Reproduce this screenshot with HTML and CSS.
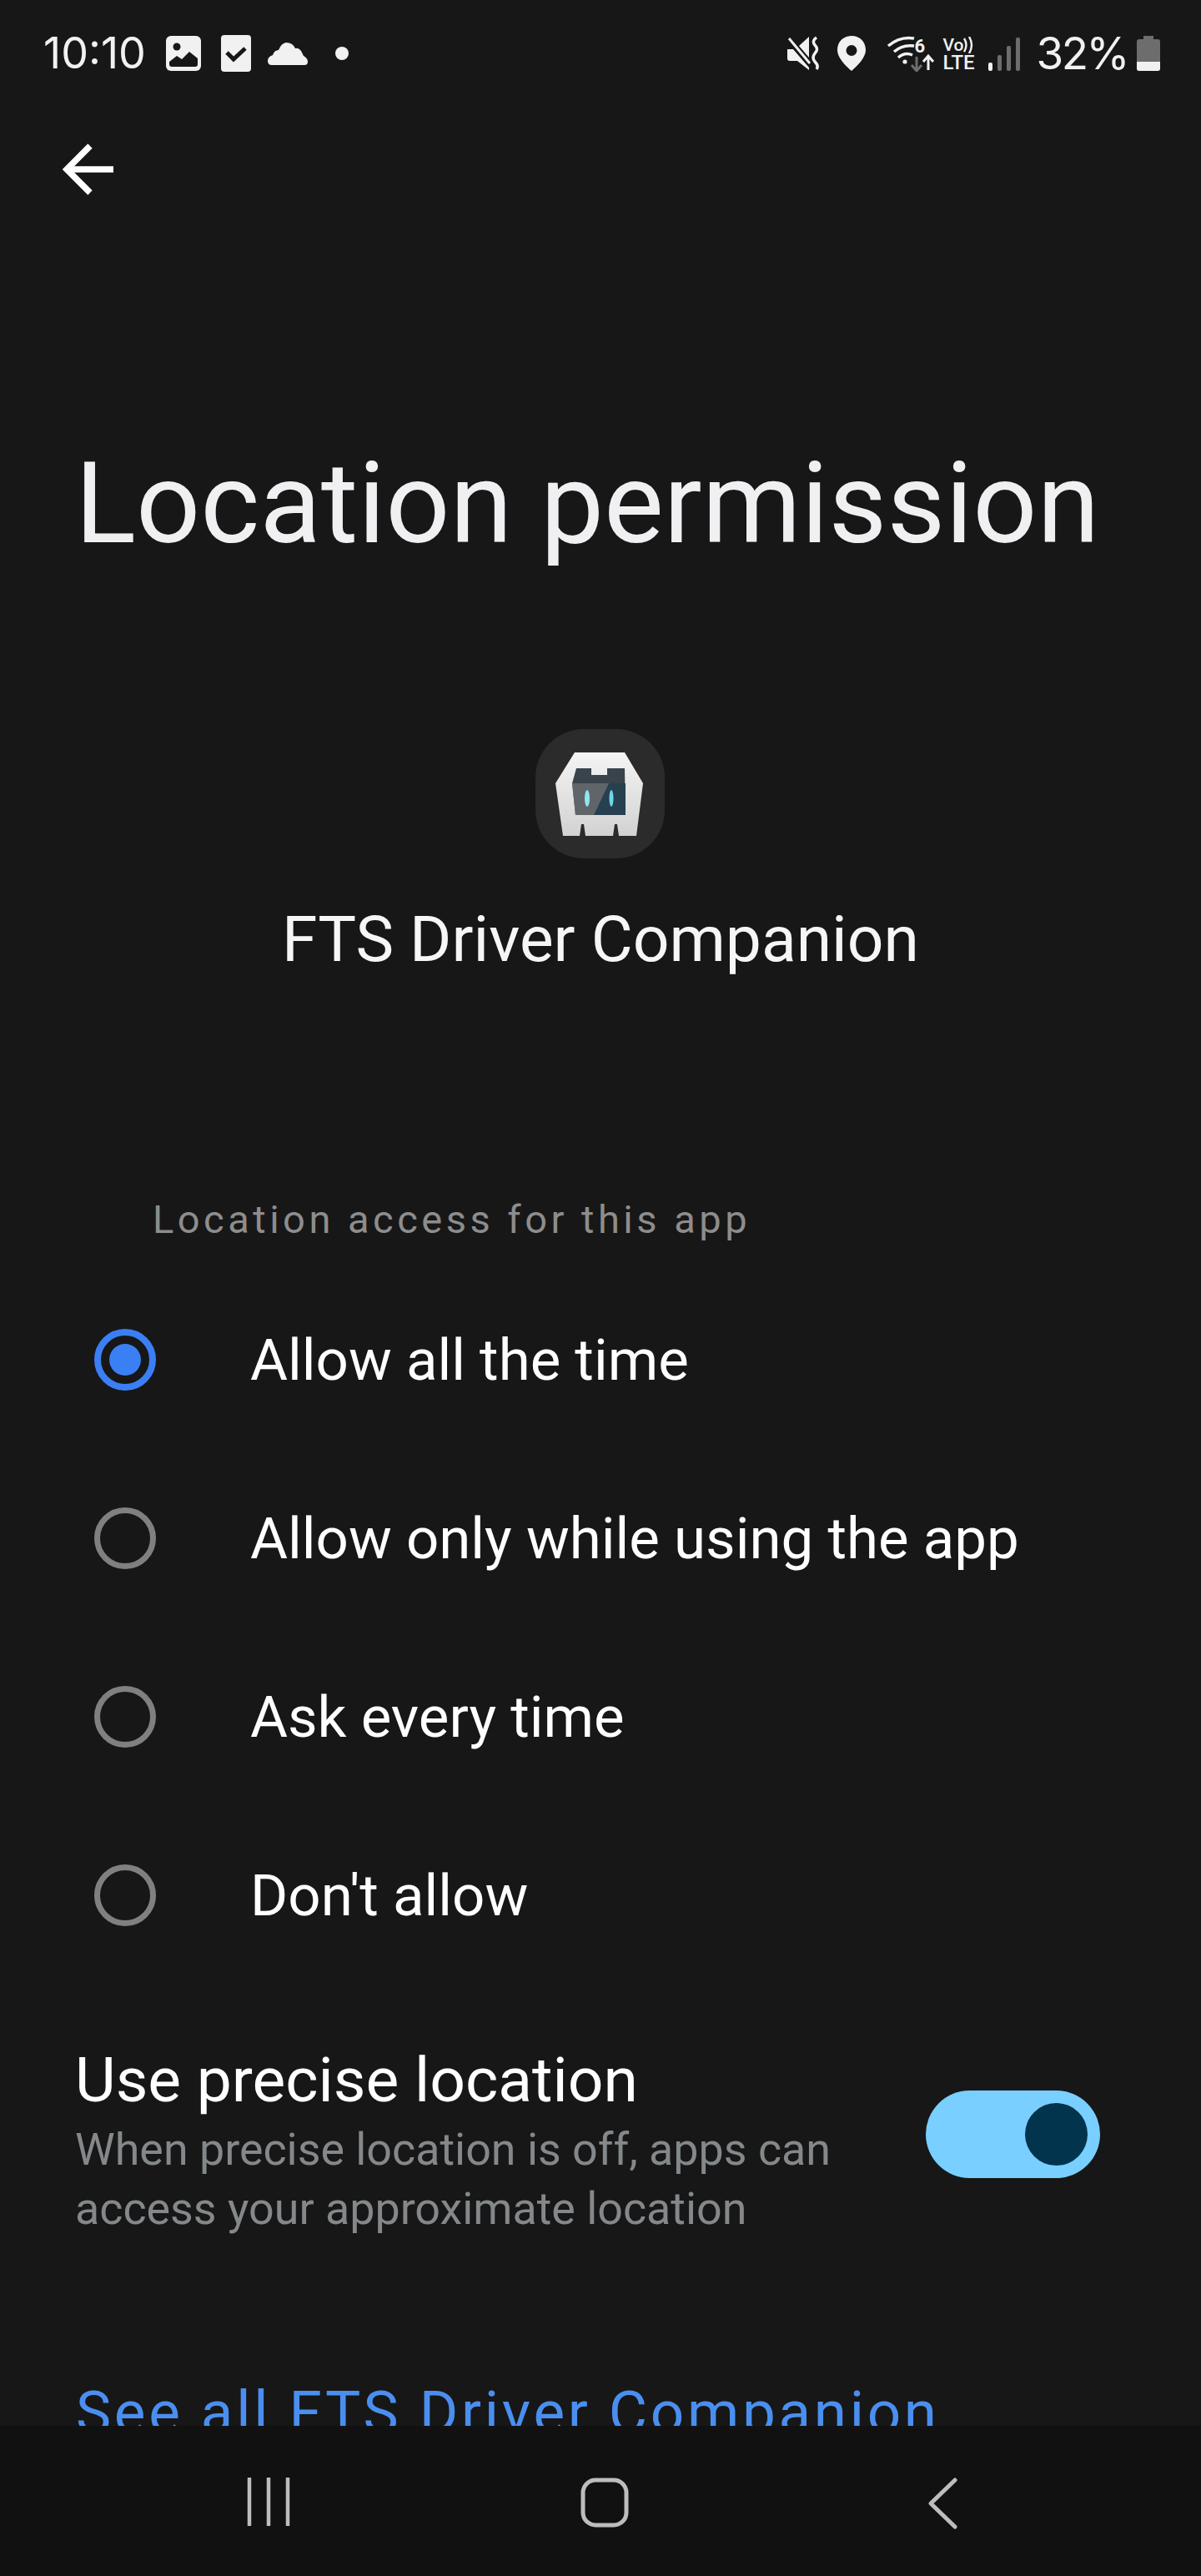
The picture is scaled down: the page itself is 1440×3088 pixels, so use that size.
FILE: index.html
```html
<!DOCTYPE html>
<html lang="en">

<head>
    <meta charset="UTF-8">
    <meta name="viewport" content="width=device-width, initial-scale=1.0">
    <title>Location permission</title>
    <link rel="stylesheet" href="styles.css">
</head>

<body>
    <div class="screen">
        <div class="content">
            <!-- status bar -->
            <div class="status-bar">
                <div class="status-left">
                    <span class="clock">10:10</span>
                    <svg class="ic-gallery" width="42" height="42" viewBox="0 0 42 42">
                        <rect width="42" height="42" rx="6" fill="#f1f1f1" />
                        <circle cx="13" cy="13" r="4.5" fill="#171717" />
                        <path d="M4 31 L13 24 L19 28 L28 19 L38 27 V34 Q38 37 35 37 H7 Q4 37 4 34 Z" fill="#171717" />
                    </svg>
                    <svg class="ic-check" width="36" height="44" viewBox="0 0 36 44">
                        <rect width="36" height="44" rx="4" fill="#f1f1f1" />
                        <path d="M7 21 L15 29 L29 16" fill="none" stroke="#171717" stroke-width="5" />
                    </svg>
                    <svg class="ic-cloud" width="48" height="28" viewBox="0 0 48 28">
                        <path d="M5 27 Q0 27 0 22 Q0 17 6 15 Q8 9 13 9 Q16 1 22 0 Q30 0 33 7 Q37 6 40 10 Q42 14 43 16 Q48 19 48 23 Q48 27 44 27 Z" fill="#f1f1f1" />
                    </svg>
                    <span class="dot"></span>
                </div>
                <div class="status-right">
                    <svg class="ic-mute" width="40" height="42" viewBox="0 0 40 42">
                        <path d="M0 16 H7 L26 38 V41 L12 30 H3 Q0 30 0 27 Z M14 12 L26 1 V26 Z" fill="#f1f1f1" />
                        <path d="M2 3 L27 33" stroke="#f1f1f1" stroke-width="3" />
                        <path d="M35 2 Q29 6 33 11 Q38 16 33 21 Q29 26 33 31 Q38 36 35 40" fill="none" stroke="#f1f1f1" stroke-width="3.5" />
                    </svg>
                    <svg class="ic-pin" width="34" height="42" viewBox="0 0 34 42">
                        <path fill-rule="evenodd" d="M17 0 C27 0 34 7 34 17 C34 26 24 36 17 42 C10 36 0 26 0 17 C0 7 7 0 17 0 Z M17 11 A6.5 6.5 0 1 0 17 24 A6.5 6.5 0 1 0 17 11 Z" fill="#f1f1f1" />
                    </svg>
                    <div class="wifi">
                        <svg width="58" height="44" viewBox="0 0 58 44">
                            <path d="M2 13 Q16 1 33 4" fill="none" stroke="#f1f1f1" stroke-width="3.5" />
                            <path d="M9 20 Q19 11 33 13" fill="none" stroke="#f1f1f1" stroke-width="3.5" />
                            <path d="M14 27 Q22 20 31 24" fill="none" stroke="#f1f1f1" stroke-width="3.5" />
                            <circle cx="22" cy="32" r="2.6" fill="#f1f1f1" />
                            <path d="M36 26 V42 M30 36 L36 43 L42 36" fill="none" stroke="#6d6d6d" stroke-width="3" />
                            <path d="M50 42 V26 M44 32 L50 25 L56 32" fill="none" stroke="#f1f1f1" stroke-width="3" />
                        </svg>
                        <span class="wifi-six">6</span>
                    </div>
                    <div class="volte">
                        <span class="vo">Vo<svg width="13" height="20" viewBox="0 0 13 20">
                                <path d="M1 2 Q6 10 1 18 M7 0 Q13 10 7 20" fill="none" stroke="#f1f1f1" stroke-width="2.4" />
                            </svg></span>
                        <span class="lte">LTE</span>
                    </div>
                    <div class="signal">
                        <span class="bar bar-1"></span>
                        <span class="bar bar-2"></span>
                        <span class="bar bar-3"></span>
                        <span class="bar bar-4"></span>
                    </div>
                    <span class="pct">32%</span>
                    <svg class="ic-battery" width="28" height="42" viewBox="0 0 28 42">
                        <path d="M8 0 H20 V4 H25 Q28 4 28 7 V39 Q28 42 25 42 H3 Q0 42 0 39 V7 Q0 4 3 4 H8 Z" fill="#6d6d6d" />
                        <path d="M0 31 H28 V39 Q28 42 25 42 H3 Q0 42 0 39 Z" fill="#f1f1f1" />
                    </svg>
                </div>
            </div>

            <!-- back arrow -->
            <div class="header">
                <svg width="62" height="62" viewBox="0 0 62 62">
                    <path d="M33 3 L5 31 L33 59 M5 31 H61" fill="none" stroke="#fff" stroke-width="7.5" />
                </svg>
            </div>

            <h1 class="title">Location permission</h1>

            <div class="app-info">
                <div class="app-icon">
                    <svg width="106" height="100" viewBox="0 0 106 100">
                        <defs>
                            <linearGradient id="shell" x1="0" y1="0" x2="0" y2="1">
                                <stop offset="0" stop-color="#f4f4f4" />
                                <stop offset="1" stop-color="#d2d2d2" />
                            </linearGradient>
                        </defs>
                        <path d="M23 0 H83 L105 37 L97 100 H76 L74 86 H71 L69 100 H36 L34 86 H31 L29 100 H9 L0 37 Z" fill="url(#shell)" />
                        <path d="M25 19 H43 V27 H62 V19 H83 L84 75 H24 L20 37 Z" fill="#39434b" />
                        <path d="M64 37 H84 L84 75 H46 Z" fill="#27404f" />
                        <path d="M20 37 H64 L46 75 H24 Z" fill="#6a6e72" opacity="0.8" />
                        <ellipse cx="38" cy="55" rx="3" ry="10" fill="#8fe6f2" />
                        <ellipse cx="67" cy="55" rx="2.5" ry="10" fill="#6fd6ea" />
                    </svg>
                </div>
                <div class="app-name">FTS Driver Companion</div>
            </div>

            <div class="group-label">Location access for this app</div>

            <div class="options">
                <div class="option">
                    <span class="radio checked"></span>
                    <span class="option-text">Allow all the time</span>
                </div>
                <div class="option">
                    <span class="radio"></span>
                    <span class="option-text">Allow only while using the app</span>
                </div>
                <div class="option">
                    <span class="radio"></span>
                    <span class="option-text">Ask every time</span>
                </div>
                <div class="option">
                    <span class="radio"></span>
                    <span class="option-text">Don't allow</span>
                </div>
            </div>

            <div class="precise">
                <div class="precise-text">
                    <div class="precise-title">Use precise location</div>
                    <div class="precise-desc">When precise location is off, apps can<br>access your approximate location</div>
                </div>
                <div class="switch"><span class="thumb"></span></div>
            </div>

            <div class="see-all">See all FTS Driver Companion</div>
        </div>

        <!-- nav bar -->
        <div class="navbar">
            <svg class="nav-recents" width="52" height="58" viewBox="0 0 52 58">
                <path d="M3 1 V57 M26 1 V57 M49 1 V57" stroke="#bdbdbd" stroke-width="4.5" stroke-linecap="round" />
            </svg>
            <svg class="nav-home" width="58" height="60" viewBox="0 0 58 60">
                <rect x="3" y="3" width="52" height="54" rx="15" fill="none" stroke="#bdbdbd" stroke-width="5" />
            </svg>
            <svg class="nav-back" width="36" height="62" viewBox="0 0 36 62">
                <path d="M33 3 L4 31 L33 59" fill="none" stroke="#bdbdbd" stroke-width="5" stroke-linecap="round" stroke-linejoin="round" />
            </svg>
        </div>
    </div>
</body>

</html>
```

FILE: styles.css
```css
* {
    box-sizing: border-box;
}

html,
body {
    margin: 0;
    padding: 0;
}

body {
    font-family: 'Roboto', 'Liberation Sans', sans-serif;
    background-color: #171717;
    color: #fff;
}

.screen {
    width: 1440px;
    height: 3088px;
    display: flex;
    flex-direction: column;
    overflow: hidden;
}

.content {
    height: 2908px;
    overflow: hidden;
    flex: none;
}

/* status bar */
.status-bar {
    height: 130px;
    padding: 43px 49px 0 52px;
    display: flex;
    justify-content: space-between;
    align-items: flex-start;
    color: #f1f1f1;
}

.status-left,
.status-right {
    display: flex;
    align-items: center;
    height: 42px;
}

.clock {
    font-family: 'Inter', 'Roboto', sans-serif;
    font-size: 52px;
    font-weight: 400;
    width: 123px;
    letter-spacing: 0;
    line-height: 42px;
    white-space: nowrap;
}

.ic-gallery {
    margin-left: 24px;
}

.ic-check {
    margin-left: 24px;
}

.ic-cloud {
    margin-left: 20px;
    margin-top: 2px;
}

.dot {
    width: 16px;
    height: 16px;
    border-radius: 50%;
    background: #f1f1f1;
    margin-left: 33px;
}

.ic-pin {
    margin-left: 20px;
}

.wifi {
    position: relative;
    width: 58px;
    height: 44px;
    margin-left: 25px;
}

.wifi-six {
    position: absolute;
    top: 3px;
    left: 33px;
    font-size: 22px;
    line-height: 22px;
    font-weight: 700;
}

.volte {
    margin-left: 9px;
    width: 42px;
    display: flex;
    flex-direction: column;
    line-height: 20px;
    font-weight: 500;
}

.vo {
    font-size: 21px;
    display: flex;
    align-items: center;
    height: 22px;
}

.lte {
    font-size: 24px;
    height: 20px;
    letter-spacing: 0;
}

.signal {
    margin-left: 13px;
    display: flex;
    align-items: flex-end;
    gap: 6px;
    height: 42px;
}

.bar {
    width: 5px;
    background: #6d6d6d;
    border-radius: 2px;
}

.bar-1 {
    height: 10px;
    background: #f1f1f1;
}

.bar-2 {
    height: 19px;
}

.bar-3 {
    height: 30px;
}

.bar-4 {
    height: 40px;
}

.pct {
    margin-left: 19px;
    font-family: 'Inter', 'Roboto', sans-serif;
    font-size: 53px;
    font-weight: 400;
    line-height: 42px;
    letter-spacing: -2.5px;
}

.ic-battery {
    margin-left: 11px;
}

/* header */
.header {
    height: 110px;
    padding: 42px 0 0 75px;
}

.title {
    margin: 284px 0 0 90px;
    font-size: 135.5px;
    font-weight: 400;
    line-height: 160px;
    color: #f0f0f2;
    white-space: nowrap;
}

.app-info {
    margin-top: 190px;
    display: flex;
    flex-direction: column;
    align-items: center;
}

.app-icon {
    width: 155px;
    height: 155px;
    margin-right: 2px;
    border-radius: 58px;
    background: #2b2b2b;
    display: flex;
    align-items: center;
    justify-content: center;
}

.app-name {
    margin-top: 52px;
    font-size: 76.8px;
    line-height: 90px;
    color: #f6f6f6;
}

.group-label {
    margin: 263px 0 0 183px;
    font-size: 47px;
    line-height: 56px;
    letter-spacing: 4.5px;
    color: #8d8d8d;
}

.options {
    margin-top: 33px;
}

.option {
    height: 214px;
    padding-left: 113px;
    display: flex;
    align-items: center;
}

.radio {
    width: 74px;
    height: 74px;
    border: 7px solid #808080;
    border-radius: 50%;
    flex: none;
    display: flex;
    align-items: center;
    justify-content: center;
}

.radio.checked {
    border-color: #3b7ff5;
    border-width: 8px;
}

.radio.checked::after {
    content: "";
    width: 38px;
    height: 38px;
    border-radius: 50%;
    background: #3b7ff5;
}

.option-text {
    margin-left: 113px;
    font-size: 69px;
    color: #fff;
    white-space: nowrap;
}

.precise {
    margin-top: 66px;
    padding: 0 121px 0 90px;
    display: flex;
    justify-content: space-between;
    align-items: center;
}

.precise-title {
    font-size: 75px;
    line-height: 96px;
    color: #fff;
}

.precise-desc {
    font-size: 53.8px;
    line-height: 71px;
    color: #84888a;
}

.switch {
    width: 209px;
    height: 105px;
    margin-bottom: 12px;
    border-radius: 53px;
    background: #79cfff;
    display: flex;
    align-items: center;
    justify-content: flex-end;
    padding-right: 15px;
}

.thumb {
    width: 75px;
    height: 75px;
    border-radius: 50%;
    background: #03344e;
}

.see-all {
    margin: 167px 0 0 91px;
    font-size: 71px;
    line-height: 84px;
    letter-spacing: 3.7px;
    color: #4a8ff0;
    white-space: nowrap;
}

/* nav bar */
.navbar {
    flex: none;
    height: 180px;
    background: #111111;
    position: relative;
    display: flex;
    align-items: flex-start;
    padding: 62px 0 0 296px;
}

.nav-home {
    margin-left: 348px;
}

.nav-back {
    margin-left: 358px;
}
```
